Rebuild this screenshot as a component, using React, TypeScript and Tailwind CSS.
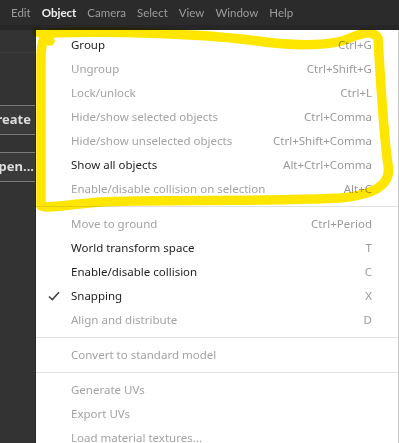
const menus = ['Edit', 'Object', 'Camera', 'Select', 'View', 'Window', 'Help'];

type Item =
  | { sep: true }
  | { sep?: false; label: string; key?: string; off?: boolean; checked?: boolean };

const items: Item[] = [
  { label: 'Group', key: 'Ctrl+G' },
  { label: 'Ungroup', key: 'Ctrl+Shift+G', off: true },
  { label: 'Lock/unlock', key: 'Ctrl+L', off: true },
  { label: 'Hide/show selected objects', key: 'Ctrl+Comma', off: true },
  { label: 'Hide/show unselected objects', key: 'Ctrl+Shift+Comma', off: true },
  { label: 'Show all objects', key: 'Alt+Ctrl+Comma' },
  { label: 'Enable/disable collision on selection', key: 'Alt+C', off: true },
  { sep: true },
  { label: 'Move to ground', key: 'Ctrl+Period', off: true },
  { label: 'World transform space', key: 'T' },
  { label: 'Enable/disable collision', key: 'C' },
  { label: 'Snapping', key: 'X', checked: true },
  { label: 'Align and distribute', key: 'D', off: true },
  { sep: true },
  { label: 'Convert to standard model', off: true },
  { sep: true },
  { label: 'Generate UVs', off: true },
  { label: 'Export UVs', off: true },
  { label: 'Load material textures...', off: true },
];

export default function App() {
  return (
    <div
      className="relative h-[443px] w-[399px] overflow-hidden bg-[#333333] text-[11.5px]"
      style={{ fontFamily: '"Noto Sans", "Open Sans", sans-serif' }}
    >
      {/* menubar */}
      <div
        className="flex h-[25px] items-center gap-[11px] bg-[#2b2b2b] pl-[11px] text-[11.5px]"
        style={{ fontFamily: 'Lato, "Noto Sans", sans-serif' }}
      >
        {menus.map((m) => (
          <span
            key={m}
            className={m === 'Object' ? 'font-bold text-[#f0f0f0]' : 'text-[#9c9c9c]'}
          >
            {m}
          </span>
        ))}
      </div>
      <div className="h-[5px] bg-[#262626]" />

      <div className="flex h-[413px]">
        {/* left panel, cut off */}
        <div className="flex w-[36px] flex-col items-end overflow-hidden border-r border-[#2a2a2a]">
          <div className="mt-[22px] h-px w-full bg-[#3d3d3d]" />
          <div className="mt-[52px] flex h-[30px] w-[70px] shrink-0 items-center justify-end border-y border-[#7a7a7a] bg-[#3a3a3a] pr-[4px] text-[13px] font-bold text-[#dcdcdc]">
            Create
          </div>
          <div className="mt-[17px] flex h-[30px] w-[70px] shrink-0 items-center justify-end border-y border-[#7a7a7a] bg-[#3a3a3a] pr-[1px] text-[13px] font-bold text-[#dcdcdc]">
            Open...
          </div>
        </div>

        {/* dropdown */}
        <div className="flex-1 border-r border-[#c8c8c8] bg-white pt-[3px]">
          {items.map((it, i) =>
            it.sep ? (
              <div key={i} className="my-[5px] h-px bg-[#e3e3e3]" />
            ) : (
              <div key={i} className="relative flex h-[24px] items-center justify-between pl-[35px] pr-[26px]">
                {it.checked && (
                  <svg className="absolute left-[12px] top-[7px]" width="12" height="10" viewBox="0 0 12 10">
                    <path d="M1 5.5 L4.3 8.6 L11 1.2" fill="none" stroke="#444" strokeWidth="1.6" />
                  </svg>
                )}
                <span className={it.off ? 'text-[#a3a3a3]' : 'text-[#1e1e1e]'}>{it.label}</span>
                {it.key && <span className="text-[#9a9a9a]">{it.key}</span>}
              </div>
            ),
          )}
        </div>
      </div>

      {/* marker scribble */}
      <svg
        className="pointer-events-none absolute left-0 top-0 mix-blend-multiply"
        width="399"
        height="443"
        viewBox="0 0 399 443"
      >
        <path
          d="M50 41 C46 36 41 33 37 32 M41 206 L41 60 C41 44 43 36 49 33 C120 31 200 34 250 40 C290 46 330 47 350 38 C364 32 374 31 378 38 C380 70 383 130 388 165 C392 186 372 195 340 198 C260 202 150 199 100 202 C70 204 50 209 41 206 Z"
          fill="none"
          stroke="#ffe600"
          strokeWidth="9.5"
          strokeLinejoin="round"
          strokeLinecap="round"
        />
      </svg>
    </div>
  );
}
